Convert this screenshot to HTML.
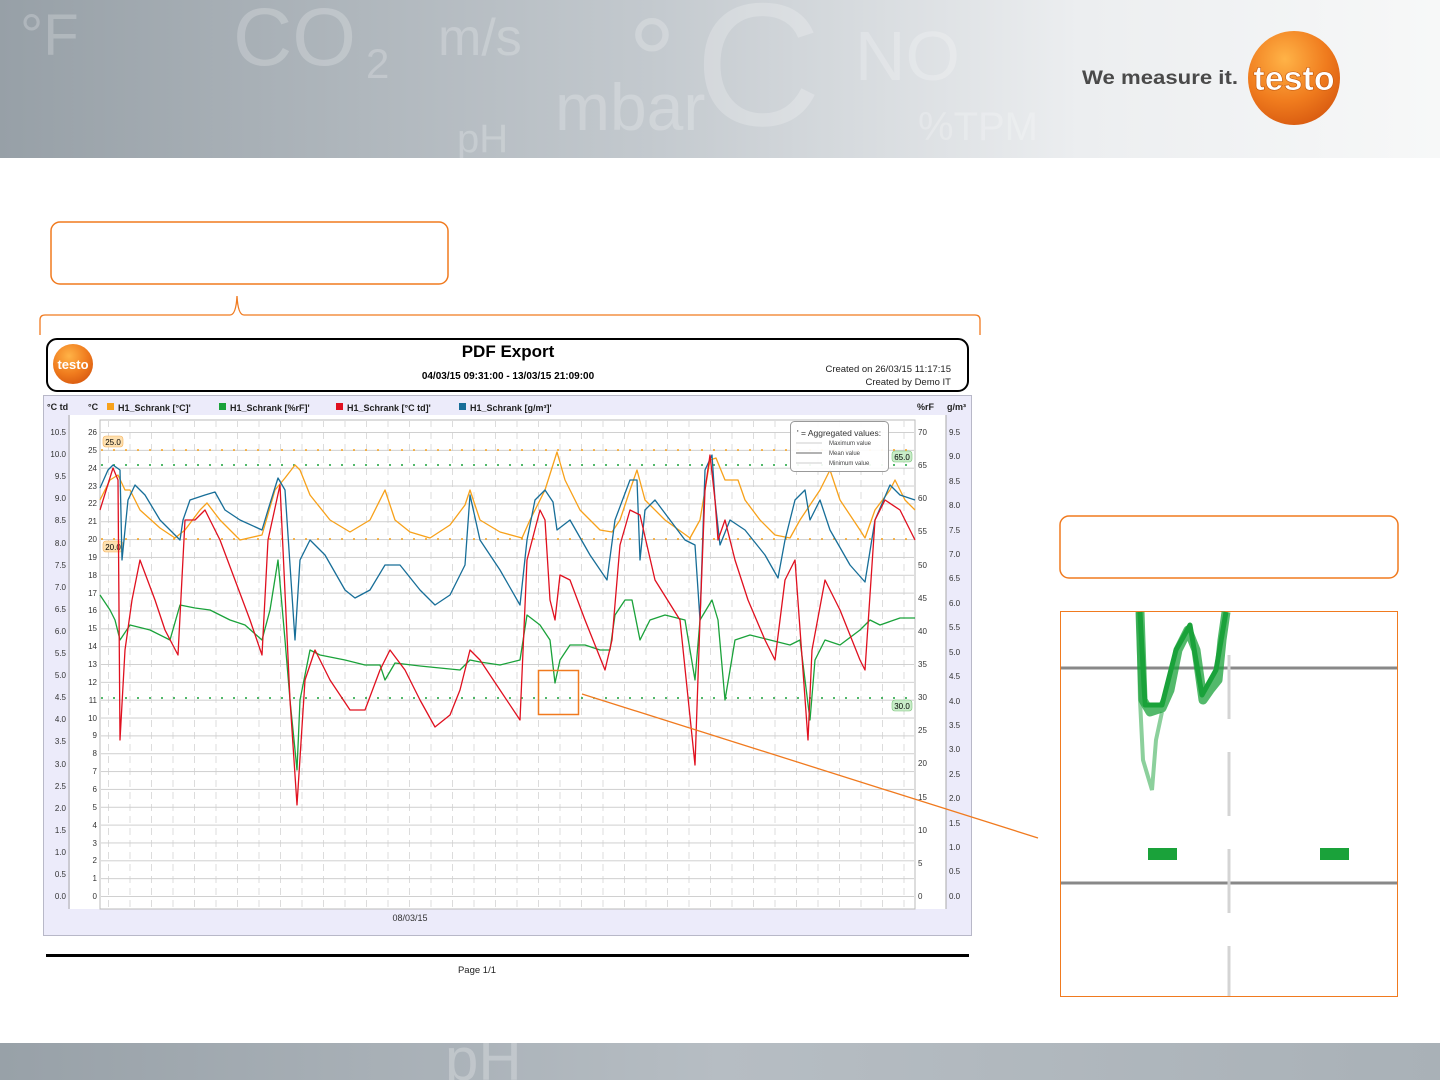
<!DOCTYPE html>
<html><head><meta charset="utf-8"><style>
html,body{margin:0;padding:0;background:#fff;}
body{width:1440px;height:1080px;overflow:hidden;position:relative;font-family:"Liberation Sans",sans-serif;}
svg{position:absolute;left:0;top:0;}
</style></head><body>
<svg width="1440" height="1080" viewBox="0 0 1440 1080" xmlns="http://www.w3.org/2000/svg" font-family="Liberation Sans, sans-serif">
<defs>
<linearGradient id="ban" x1="0" x2="1" y1="0" y2="0">
<stop offset="0" stop-color="#97a0a7"/><stop offset="0.45" stop-color="#c3c9ce"/><stop offset="0.75" stop-color="#eceef0"/><stop offset="1" stop-color="#f7f8f8"/></linearGradient>
<linearGradient id="ban2" x1="0" x2="1" y1="0" y2="0">
<stop offset="0" stop-color="#98a1a8"/><stop offset="0.5" stop-color="#b6bdc3"/><stop offset="1" stop-color="#a9b1b7"/></linearGradient>
<radialGradient id="org" cx="0.4" cy="0.3" r="0.75"><stop offset="0" stop-color="#ffb347"/><stop offset="0.6" stop-color="#f07c1e"/><stop offset="1" stop-color="#d85a10"/></radialGradient>
<pattern id="hg" x="0" y="432" width="10" height="17.846" patternUnits="userSpaceOnUse"><line x1="0" y1="0.5" x2="10" y2="0.5" stroke="#cfcfcf" stroke-width="1"/></pattern>
<pattern id="vg" x="108" y="0" width="21.5" height="12" patternUnits="userSpaceOnUse"><line x1="0.5" y1="0" x2="0.5" y2="7" stroke="#dcdcdc" stroke-width="1"/></pattern>
</defs>
<!-- banner -->
<rect x="0" y="0" width="1440" height="158" fill="url(#ban)"/>
<g fill="#fff" fill-opacity="0.22">
<text x="20" y="55" font-size="58">°F</text>
<text x="233" y="65" font-size="82">CO</text>
<text x="366" y="78" font-size="42">2</text>
<text x="438" y="55" font-size="52">m/s</text>
<text x="628" y="102" font-size="120">°</text>
<text x="695" y="125" font-size="175">C</text>
<text x="555" y="130" font-size="66">mbar</text>
<text x="457" y="152" font-size="40">pH</text>
<text x="855" y="80" font-size="70">NO</text>
<text x="918" y="140" font-size="40">%TPM</text>
</g>
<text x="1082" y="84" font-size="19" font-weight="bold" fill="#4a4a4a" textLength="156" lengthAdjust="spacingAndGlyphs">We measure it.</text>
<ellipse cx="1294" cy="78" rx="46" ry="47" fill="url(#org)"/>
<text x="1294" y="90" font-size="34" font-weight="bold" fill="#fff" text-anchor="middle" stroke="#c2560c" stroke-width="0.6">testo</text>
<!-- bottom band -->
<rect x="0" y="1043" width="1440" height="37" fill="url(#ban2)"/>
<text x="445" y="1080" font-size="60" fill="#fff" fill-opacity="0.25">pH</text>
<!-- orange callouts -->
<rect x="51" y="222" width="397" height="62" rx="9" fill="none" stroke="#f07a1f" stroke-width="1.5"/>
<path d="M40 335 L40 320 Q40 315 45 315 L230 315 Q236 315 237 296 Q238 315 244 315 L975 315 Q980 315 980 320 L980 335" fill="none" stroke="#f07a1f" stroke-width="1.3"/>
<rect x="1060" y="516" width="338" height="62" rx="9" fill="none" stroke="#f07a1f" stroke-width="1.5"/>
<!-- report header -->
<rect x="47" y="339" width="921" height="52" rx="10" fill="#fff" stroke="#000" stroke-width="2"/>
<circle cx="73" cy="364" r="20" fill="url(#org)"/>
<text x="73" y="369" font-size="13" font-weight="bold" fill="#fff" text-anchor="middle">testo</text>
<text x="508" y="357" font-size="17" font-weight="bold" text-anchor="middle">PDF Export</text>
<text x="508" y="379" font-size="10" font-weight="bold" text-anchor="middle">04/03/15 09:31:00 - 13/03/15 21:09:00</text>
<text x="951" y="372" font-size="9.5" text-anchor="end" fill="#222">Created on  26/03/15 11:17:15</text>
<text x="951" y="385" font-size="9.5" text-anchor="end" fill="#222">Created by  Demo IT</text>
<!-- chart frame -->
<rect x="43.5" y="395.5" width="928" height="540" fill="#ecebfa" stroke="#b8b8c8"/>
<rect x="70" y="415" width="876" height="494" fill="#fff"/>
<line x1="69" y1="415" x2="69" y2="909" stroke="#aaa"/>
<line x1="946" y1="415" x2="946" y2="909" stroke="#aaa"/>
<rect x="100" y="420" width="815" height="489" fill="#fff" stroke="#bbb"/>
<rect x="101" y="421" width="813" height="487" fill="url(#vg)"/>
<rect x="101" y="421" width="813" height="478" fill="url(#hg)"/>
<!-- legend row -->
<g font-size="9" font-weight="bold" fill="#222">
<text x="47" y="410">°C td</text><text x="88" y="410">°C</text>
<rect x="107" y="403" width="7" height="7" fill="#f7a11a"/><text x="118" y="411">H1_Schrank [°C]'</text>
<rect x="219" y="403" width="7" height="7" fill="#1aa23a"/><text x="230" y="411">H1_Schrank [%rF]'</text>
<rect x="336" y="403" width="7" height="7" fill="#e0101f"/><text x="347" y="411">H1_Schrank [°C td]'</text>
<rect x="459" y="403" width="7" height="7" fill="#176e98"/><text x="470" y="411">H1_Schrank [g/m³]'</text>
<text x="917" y="410">%rF</text><text x="947" y="410">g/m³</text>
</g>
<!-- axis labels -->
<g font-size="8" fill="#333" text-anchor="end">
<text x="66" y="435">10.5</text><text x="66" y="457">10.0</text><text x="66" y="479">9.5</text><text x="66" y="501">9.0</text><text x="66" y="523">8.5</text><text x="66" y="546">8.0</text><text x="66" y="568">7.5</text><text x="66" y="590">7.0</text><text x="66" y="612">6.5</text><text x="66" y="634">6.0</text><text x="66" y="656">5.5</text><text x="66" y="678">5.0</text><text x="66" y="700">4.5</text><text x="66" y="722">4.0</text><text x="66" y="744">3.5</text><text x="66" y="767">3.0</text><text x="66" y="789">2.5</text><text x="66" y="811">2.0</text><text x="66" y="833">1.5</text><text x="66" y="855">1.0</text><text x="66" y="877">0.5</text><text x="66" y="899">0.0</text>
<text x="97" y="435">26</text><text x="97" y="453">25</text><text x="97" y="471">24</text><text x="97" y="489">23</text><text x="97" y="506">22</text><text x="97" y="524">21</text><text x="97" y="542">20</text><text x="97" y="560">19</text><text x="97" y="578">18</text><text x="97" y="596">17</text><text x="97" y="613">16</text><text x="97" y="631">15</text><text x="97" y="649">14</text><text x="97" y="667">13</text><text x="97" y="685">12</text><text x="97" y="703">11</text><text x="97" y="721">10</text><text x="97" y="738">9</text><text x="97" y="756">8</text><text x="97" y="774">7</text><text x="97" y="792">6</text><text x="97" y="810">5</text><text x="97" y="828">4</text><text x="97" y="846">3</text><text x="97" y="863">2</text><text x="97" y="881">1</text><text x="97" y="899">0</text>
</g>
<g font-size="8" fill="#333">
<text x="918" y="435">70</text><text x="918" y="468">65</text><text x="918" y="501">60</text><text x="918" y="534">55</text><text x="918" y="568">50</text><text x="918" y="601">45</text><text x="918" y="634">40</text><text x="918" y="667">35</text><text x="918" y="700">30</text><text x="918" y="733">25</text><text x="918" y="766">20</text><text x="918" y="800">15</text><text x="918" y="833">10</text><text x="918" y="866">5</text><text x="918" y="899">0</text>
<text x="949" y="435">9.5</text><text x="949" y="459">9.0</text><text x="949" y="484">8.5</text><text x="949" y="508">8.0</text><text x="949" y="533">7.5</text><text x="949" y="557">7.0</text><text x="949" y="581">6.5</text><text x="949" y="606">6.0</text><text x="949" y="630">5.5</text><text x="949" y="655">5.0</text><text x="949" y="679">4.5</text><text x="949" y="704">4.0</text><text x="949" y="728">3.5</text><text x="949" y="752">3.0</text><text x="949" y="777">2.5</text><text x="949" y="801">2.0</text><text x="949" y="826">1.5</text><text x="949" y="850">1.0</text><text x="949" y="874">0.5</text><text x="949" y="899">0.0</text>
</g>
<text x="410" y="921" font-size="9" fill="#333" text-anchor="middle">08/03/15</text>
<!-- limit lines -->
<line x1="101" y1="450" x2="914" y2="450" stroke="#f7a11a" stroke-width="1.5" stroke-dasharray="2,10"/>
<line x1="101" y1="539" x2="914" y2="539" stroke="#f7a11a" stroke-width="1.5" stroke-dasharray="2,10"/>
<line x1="101" y1="465" x2="914" y2="465" stroke="#1aa23a" stroke-width="1.5" stroke-dasharray="2,10"/>
<line x1="101" y1="698" x2="914" y2="698" stroke="#1aa23a" stroke-width="1.5" stroke-dasharray="2,10"/>
<rect x="103" y="436" width="20" height="11" rx="3" fill="#fde0b0" stroke="#f7b15a" stroke-width="0.6"/><text x="113" y="445" font-size="8" text-anchor="middle">25.0</text>
<rect x="103" y="541" width="20" height="11" rx="3" fill="#fde0b0" stroke="#f7b15a" stroke-width="0.6"/><text x="113" y="550" font-size="8" text-anchor="middle">20.0</text>
<rect x="892" y="451" width="20" height="11" rx="3" fill="#c8ecc8" stroke="#7cc47c" stroke-width="0.6"/><text x="902" y="460" font-size="8" text-anchor="middle">65.0</text>
<rect x="892" y="700" width="20" height="11" rx="3" fill="#c8ecc8" stroke="#7cc47c" stroke-width="0.6"/><text x="902" y="709" font-size="8" text-anchor="middle">30.0</text>
<!-- data -->
<g fill="none" stroke-width="1.3" stroke-linejoin="round">
<polyline stroke="#f7a11a" points="100,500 110,480 118,475 125,490 130,490 140,510 160,528 175,538 185,530 200,510 207,503 220,520 240,540 262,535 275,490 285,478 295,465 300,470 310,495 330,520 350,532 370,520 385,490 395,520 410,532 430,538 450,525 465,505 470,490 480,520 500,532 522,538 530,520 545,490 557,452 565,480 580,510 600,530 612,532 620,520 630,490 637,470 645,500 665,520 690,538 700,520 710,460 716,458 725,480 738,480 745,500 760,520 775,535 790,538 800,520 820,490 830,470 840,500 860,530 865,538 875,510 890,490 895,480 905,500 915,510"/>
<polyline stroke="#1aa23a" points="100,595 110,610 115,620 120,640 130,625 150,630 170,640 180,605 195,608 210,610 230,620 245,625 262,640 270,610 278,560 285,640 290,700 297,770 300,700 310,650 320,655 345,660 365,665 380,665 385,680 395,663 420,666 440,668 460,670 470,660 480,662 500,665 520,660 527,615 540,625 550,640 555,683 560,660 570,645 585,645 600,650 610,650 615,615 625,600 632,600 640,640 650,620 665,615 685,620 695,680 700,620 712,600 718,620 725,700 735,640 750,635 770,640 790,645 800,640 810,720 815,660 825,640 840,645 860,630 870,620 880,625 900,618 915,618"/>
<polyline stroke="#176e98" points="100,488 108,470 113,465 120,470 122,560 128,500 135,485 145,495 160,520 180,540 183,520 190,500 205,495 215,492 225,510 240,520 262,530 268,510 278,478 285,490 295,640 300,560 310,540 325,555 345,590 355,598 370,590 385,565 400,565 420,590 435,605 450,595 465,565 470,495 480,540 500,570 520,605 527,540 535,500 545,490 553,502 557,530 570,520 590,555 607,580 615,520 630,480 637,480 640,560 645,510 655,500 670,520 685,540 695,545 700,620 705,470 712,455 715,500 720,545 730,520 745,530 765,555 778,578 785,540 795,500 805,490 810,520 820,500 830,530 850,565 865,582 875,520 890,485 900,495 915,500"/>
<polyline stroke="#e0101f" points="100,510 113,468 118,480 120,740 125,650 132,600 140,560 155,600 165,630 178,655 185,520 195,520 205,510 220,540 235,580 250,620 262,655 268,540 280,485 290,700 297,805 305,680 315,650 330,680 350,710 365,710 380,670 390,650 405,670 420,700 435,727 450,715 460,690 470,650 480,660 500,690 520,720 527,560 540,510 545,520 550,600 555,620 560,575 570,580 585,620 605,670 612,640 620,545 630,510 640,515 655,580 680,620 695,765 700,620 705,490 710,455 715,500 718,540 725,520 735,560 748,600 765,640 775,660 785,580 795,560 808,740 812,650 825,580 840,610 860,660 865,670 875,520 885,500 900,510 915,540"/>
</g>
<!-- legend box -->
<rect x="790.5" y="421.5" width="98" height="50" rx="4" fill="#fff" fill-opacity="0.92" stroke="#999"/>
<text x="797" y="436" font-size="8.5" fill="#333">' = Aggregated values:</text>
<g font-size="6" fill="#444"><text x="829" y="445">Maximum value</text><text x="829" y="455">Mean value</text><text x="829" y="465">Minimum value</text></g>
<line x1="796" y1="443" x2="822" y2="443" stroke="#ccc"/><line x1="796" y1="453" x2="822" y2="453" stroke="#666"/><line x1="796" y1="463" x2="822" y2="463" stroke="#ccc"/>
<!-- highlight -->
<rect x="538.5" y="670.5" width="40" height="44" fill="none" stroke="#f07a1f" stroke-width="1.5"/>
<line x1="582" y1="694" x2="1038" y2="838" stroke="#f07a1f" stroke-width="1.3"/>
<!-- footer -->
<rect x="46" y="954" width="923" height="3" fill="#000"/>
<text x="477" y="973" font-size="9.5" text-anchor="middle" fill="#222">Page 1/1</text>
<!-- zoom panel -->
<rect x="1060.5" y="611.5" width="337" height="385" fill="#fff" stroke="#f07a1f"/>
<line x1="1061" y1="668" x2="1397" y2="668" stroke="#888" stroke-width="3"/>
<line x1="1061" y1="883" x2="1397" y2="883" stroke="#888" stroke-width="3"/>
<line x1="1229" y1="655" x2="1229" y2="996" stroke="#d4d4d4" stroke-width="3" stroke-dasharray="64,33"/>
<path d="M1138 612 L1140 700 L1143 760 L1152 790 L1156 740 L1162 712" fill="none" stroke="#1aa23a" stroke-width="4" stroke-opacity="0.5"/>
<path d="M1140 612 L1143 700 L1150 712 L1162 708 L1170 690 L1178 650 L1188 630 L1196 650 L1203 700 L1210 690 L1218 680 L1222 640 L1226 612" fill="none" stroke="#1aa23a" stroke-width="9" stroke-linejoin="round" stroke-opacity="0.75"/>
<path d="M1140 612 L1145 705 L1162 705 L1176 650 L1190 625 L1202 695 L1216 670 L1226 612" fill="none" stroke="#1aa23a" stroke-width="5" stroke-linejoin="round"/>
<rect x="1148" y="848" width="29" height="12" fill="#1aa23a"/>
<rect x="1320" y="848" width="29" height="12" fill="#1aa23a"/>
</svg>
</body></html>
